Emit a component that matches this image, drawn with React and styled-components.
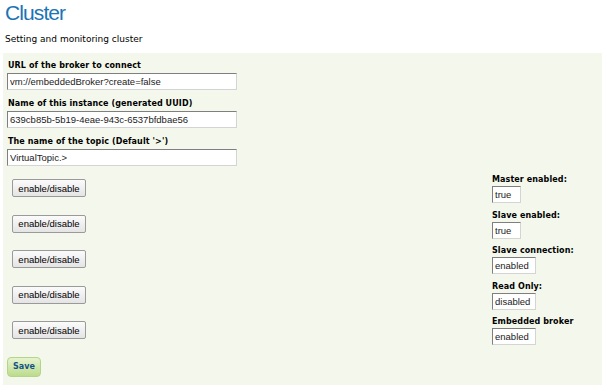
import React from "react";
import styled, { createGlobalStyle } from "styled-components";

const Global = createGlobalStyle`
  html, body { margin: 0; padding: 0; background: #fff; }
  body { font-family: "DejaVu Sans", Verdana, sans-serif; color: #000; }
`;

const Page = styled.div`
  padding: 0 0 0 3px;
`;

const Title = styled.h1`
  margin: 0;
  padding: 1px 0 0 2px;
  font-family: "Liberation Sans", Arial, sans-serif;
  font-weight: normal;
  font-size: 21px;
  line-height: 24px;
  color: #1b74b4;
  letter-spacing: -0.9px;
`;

const Subtitle = styled.p`
  margin: 8px 0 0 2px;
  font-size: 9px;
  line-height: 12px;
`;

const Panel = styled.div`
  margin-top: 8px;
  background: #f4f8ec;
  height: 332px;
  padding: 8px 0 0 4px;
  box-sizing: border-box;
`;

const Field = styled.div`
  display: flex;
  flex-direction: column;
  margin-bottom: 9px;
`;

const Label = styled.label`
  font-weight: bold;
  font-size: 8px;
  line-height: 10px;
  margin: 0 0 2px 1px;
  letter-spacing: 0.1px;
`;

const TextInput = styled.input`
  box-sizing: border-box;
  width: ${(p) => p.$w}px;
  height: 17px;
  padding: 0 2px;
  margin: 0;
  font-family: "Liberation Sans", Arial, sans-serif;
  font-size: 9.5px;
  color: #222;
  background: #fff;
  border: 1px solid;
  border-color: #7f7f7f #d4d4d4 #d4d4d4 #7f7f7f;
  outline: none;
`;

const Rows = styled.div`
  margin-top: 8px;
  display: flex;
  flex-direction: column;
`;

const Row = styled.div`
  display: flex;
  justify-content: space-between;
  align-items: flex-start;
  height: 35.5px;
`;

const ToggleButton = styled.button`
  margin: 4px 0 0 5px;
  width: 74px;
  height: 18px;
  padding: 0;
  font-family: "Liberation Sans", Arial, sans-serif;
  font-size: 9.5px;
  color: #000;
  background: linear-gradient(#fbfbfb, #e4e4e4);
  border: 1px solid #9a9a9a;
  border-radius: 2px;
`;

const Status = styled.div`
  width: 110px;
  display: flex;
  flex-direction: column;
  align-items: flex-start;
`;

const StatusLabel = styled.span`
  font-weight: bold;
  font-size: 8px;
  line-height: 10px;
  margin-bottom: 1px;
  letter-spacing: 0.1px;
`;

const SaveButton = styled.button`
  margin: 4px 0 0 0;
  width: 34px;
  height: 20px;
  padding: 0;
  font-family: "DejaVu Sans", Verdana, sans-serif;
  font-size: 8px;
  font-weight: bold;
  color: #13528a;
  background: linear-gradient(#e6f3cf, #bcdc8c);
  border: 1px solid #b4d48a;
  border-radius: 4px;
`;

const fields = [
  { label: "URL of the broker to connect", value: "vm://embeddedBroker?create=false" },
  { label: "Name of this instance (generated UUID)", value: "639cb85b-5b19-4eae-943c-6537bfdbae56" },
  { label: "The name of the topic (Default '>')", value: "VirtualTopic.>" },
];

const statuses = [
  { label: "Master enabled:", value: "true", w: 29 },
  { label: "Slave enabled:", value: "true", w: 29 },
  { label: "Slave connection:", value: "enabled", w: 44 },
  { label: "Read Only:", value: "disabled", w: 44 },
  { label: "Embedded broker", value: "enabled", w: 44 },
];

export default function App() {
  return (
    <Page>
      <Global />
      <Title>Cluster</Title>
      <Subtitle>Setting and monitoring cluster</Subtitle>
      <Panel>
        {fields.map((f) => (
          <Field key={f.label}>
            <Label>{f.label}</Label>
            <TextInput $w={230} defaultValue={f.value} />
          </Field>
        ))}
        <Rows>
          {statuses.map((s) => (
            <Row key={s.label}>
              <ToggleButton>enable/disable</ToggleButton>
              <Status>
                <StatusLabel>{s.label}</StatusLabel>
                <TextInput $w={s.w} defaultValue={s.value} readOnly />
              </Status>
            </Row>
          ))}
        </Rows>
        <SaveButton>Save</SaveButton>
      </Panel>
    </Page>
  );
}
